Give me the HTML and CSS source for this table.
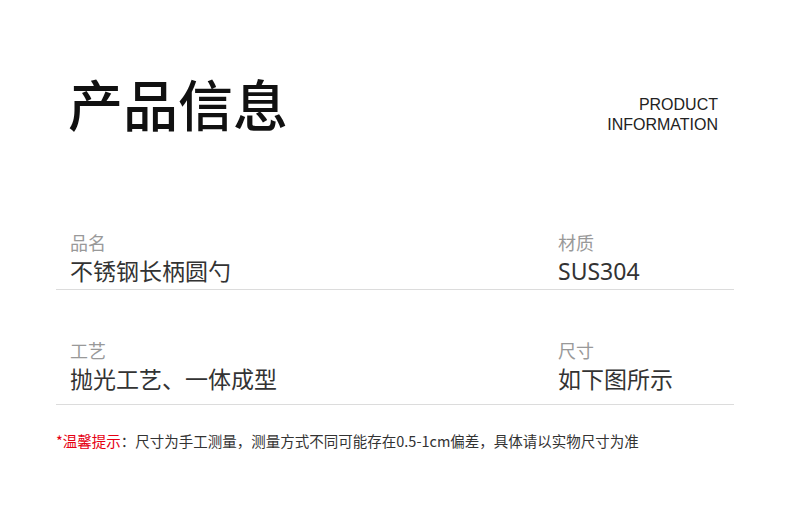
FILE: index.html
```html
<!DOCTYPE html>
<html lang="zh">
<head>
    <meta charset="UTF-8">
    <title>产品信息</title>
    <link rel="stylesheet" href="styles.css">
</head>
<body>

<div class="page">
    <div class="header">
        <h1 class="title">产品信息</h1>
        <div class="subtitle">PRODUCT<br>INFORMATION</div>
    </div>

    <div class="row">
        <div class="cell">
            <div class="label">品名</div>
            <div class="value">不锈钢长柄圆勺</div>
        </div>
        <div class="cell">
            <div class="label">材质</div>
            <div class="value">SUS304</div>
        </div>
    </div>

    <div class="row row-last">
        <div class="cell">
            <div class="label">工艺</div>
            <div class="value">抛光工艺、一体成型</div>
        </div>
        <div class="cell">
            <div class="label">尺寸</div>
            <div class="value">如下图所示</div>
        </div>
    </div>

    <p class="note"><span class="tip">*温馨提示</span>：尺寸为手工测量，测量方式不同可能存在0.5-1cm偏差，具体请以实物尺寸为准</p>
</div>

</body>
</html>
```

FILE: styles.css
```css
body {
    margin: 0;
    background: #fff;
    font-family: "Noto Sans", "Noto Sans CJK SC", sans-serif;
    color: #333;
}

.page {
    width: 678px;
    margin: 0 56px;
    padding-top: 75px;
}

.header {
    display: flex;
    justify-content: space-between;
    align-items: flex-start;
    padding: 0 16px 0 12px;
}

.title {
    margin: 0;
    font-family: "Noto Sans CJK SC", sans-serif;
    font-size: 55px;
    font-weight: 500;
    line-height: 55px;
    color: #111;
}

.subtitle {
    margin-top: 20px;
    font-family: "Liberation Sans", sans-serif;
    font-size: 16px;
    line-height: 20px;
    text-align: right;
    color: #222;
}

.row {
    display: grid;
    grid-template-columns: 488px 1fr;
    padding: 0 14px 2px;
    border-bottom: 1px solid #dcdcdc;
}

.header + .row {
    margin-top: 94px;
}

.row + .row {
    margin-top: 47px;
}

.row-last {
    padding-bottom: 9px;
}

.label {
    font-family: "Noto Sans CJK SC", sans-serif;
    font-size: 18px;
    line-height: 26px;
    color: #999;
}

.value {
    font-size: 23px;
    line-height: 32px;
    color: #333;
}

.note {
    margin: 26px 0 0;
    font-family: "Noto Sans CJK SC", sans-serif;
    font-size: 14.5px;
    line-height: 20px;
    color: #333;
}

.tip {
    color: #e60012;
}
```
